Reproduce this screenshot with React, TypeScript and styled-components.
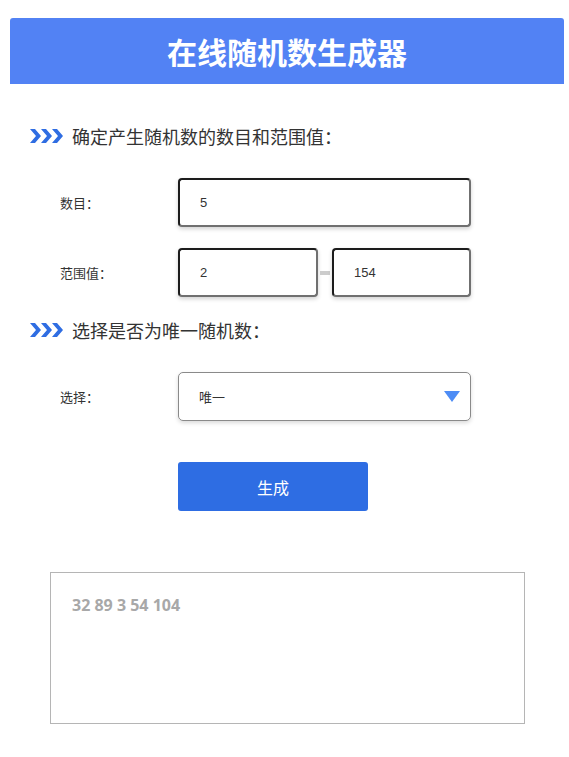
import React, { useState } from 'react';
import styled, { createGlobalStyle } from 'styled-components';

const GlobalStyle = createGlobalStyle`
    body {
        margin: 0;
        background: #ffffff;
        font-family: "Liberation Sans", "Noto Sans CJK SC", sans-serif;
    }
`;

function Chevrons() {
    return (
        <svg width="33" height="14" viewBox="0 0 33 14">
            {[0, 11, 22].map((x) => (
                <polygon
                    key={x}
                    points={`${x},0 ${x + 5},0 ${x + 11},7 ${x + 5},14 ${x},14 ${x + 6},7`}
                    fill="#2f6de2"
                />
            ))}
        </svg>
    );
}

export default function App() {
    const [count, setCount] = useState('5');
    const [min, setMin] = useState('2');
    const [max, setMax] = useState('154');

    return (
        <Page>
            <GlobalStyle />
            <Header>在线随机数生成器</Header>

            <Heading $top={40}>
                <Chevrons />
                <span>确定产生随机数的数目和范围值：</span>
            </Heading>

            <Row $top={30}>
                <Label>数目：</Label>
                <NumberInput value={count} onChange={(e) => setCount(e.target.value)} $width={293} />
            </Row>
            <Row $top={21}>
                <Label>范围值：</Label>
                <NumberInput value={min} onChange={(e) => setMin(e.target.value)} $width={140} />
                <Dash />
                <NumberInput value={max} onChange={(e) => setMax(e.target.value)} $width={139} />
            </Row>

            <Heading $top={21}>
                <Chevrons />
                <span>选择是否为唯一随机数：</span>
            </Heading>

            <Row $top={30}>
                <Label>选择：</Label>
                <SelectBox>
                    <span>唯一</span>
                    <svg width="16" height="11" viewBox="0 0 16 11">
                        <polygon points="0,0 16,0 8,11" fill="#4d8cf5" />
                    </svg>
                </SelectBox>
            </Row>

            <ButtonRow>
                <GenerateButton>生成</GenerateButton>
            </ButtonRow>

            <Output>32 89 3 54 104</Output>
        </Page>
    );
}

const Page = styled.div`
    width: 569px;
    padding-bottom: 34px;
`;

const Header = styled.div`
    margin: 18px 5px 0 10px;
    height: 66px;
    display: flex;
    align-items: center;
    justify-content: center;
    background: #5282f4;
    border-radius: 3px 3px 0 0;
    color: #ffffff;
    font-size: 30px;
    font-weight: 700;
    font-family: "Noto Sans CJK SC", sans-serif;
`;

const Heading = styled.div<{ $top: number }>`
    margin-top: ${(p) => p.$top}px;
    padding-left: 30px;
    height: 24px;
    display: flex;
    align-items: center;
    gap: 9px;
    font-size: 18px;
    color: #333333;
    font-family: "Noto Sans CJK SC", sans-serif;
`;

const Row = styled.div<{ $top: number }>`
    margin-top: ${(p) => p.$top}px;
    padding-left: 60px;
    display: flex;
    align-items: center;
`;

const Label = styled.div`
    width: 118px;
    font-size: 13px;
    color: #333333;
    font-family: "Noto Sans CJK SC", sans-serif;
`;

const NumberInput = styled.input<{ $width: number }>`
    box-sizing: border-box;
    width: ${(p) => p.$width}px;
    height: 49px;
    padding: 0 20px;
    border: 2px solid #1c1c1c;
    border-right-color: #707070;
    border-bottom-color: #707070;
    border-radius: 4px;
    box-shadow: 0 2px 4px rgba(0, 0, 0, 0.18);
    font-size: 13px;
    color: #333333;
    font-family: "Liberation Sans", sans-serif;
    outline: none;
`;

const Dash = styled.div`
    width: 10px;
    height: 4px;
    margin: 0 2px;
    background: #cccccc;
`;

const SelectBox = styled.div`
    box-sizing: border-box;
    width: 293px;
    height: 49px;
    padding: 0 10px 0 20px;
    display: flex;
    align-items: center;
    justify-content: space-between;
    border: 1px solid #8a8a8a;
    border-radius: 5px;
    box-shadow: 0 2px 4px rgba(0, 0, 0, 0.15);
    font-size: 13px;
    color: #333333;
    font-family: "Noto Sans CJK SC", sans-serif;
`;

const ButtonRow = styled.div`
    margin-top: 41px;
    padding-left: 178px;
`;

const GenerateButton = styled.button`
    width: 190px;
    height: 49px;
    border: none;
    border-radius: 3px;
    background: #2e6de3;
    color: #ffffff;
    font-size: 16px;
    font-family: "Noto Sans CJK SC", sans-serif;
    cursor: pointer;
`;

const Output = styled.div`
    box-sizing: border-box;
    margin: 61px 0 0 50px;
    width: 475px;
    height: 152px;
    padding: 21px 21px;
    border: 1px solid #b5b5b5;
    font-size: 16px;
    font-weight: 700;
    color: #a8a8a8;
    font-family: "Open Sans", sans-serif;
`;
